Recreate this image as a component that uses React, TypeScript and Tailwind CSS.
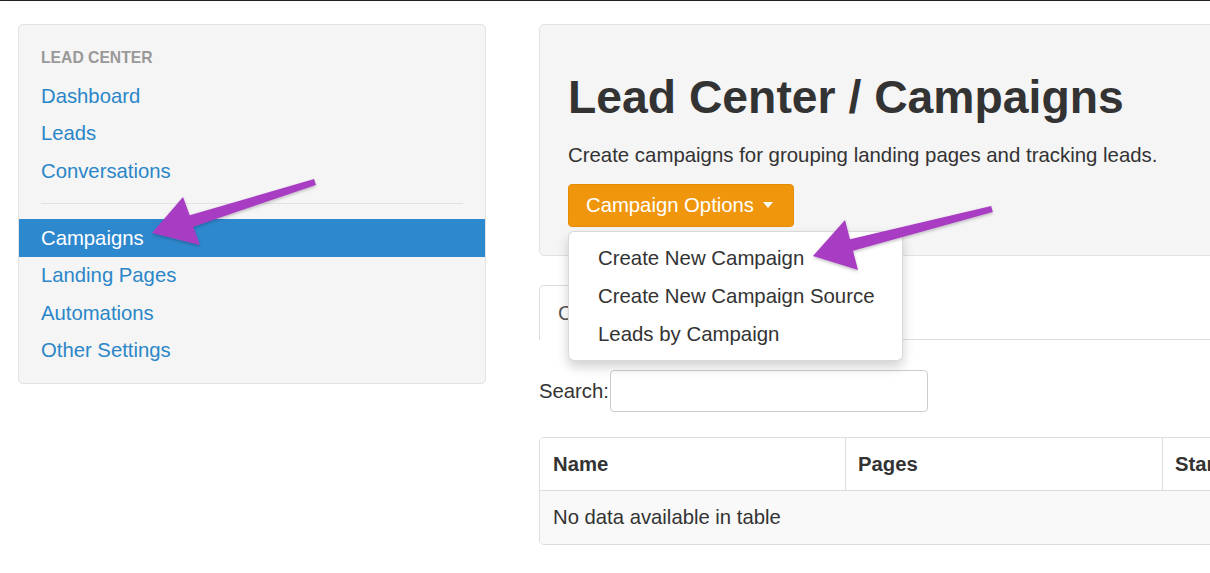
import React from 'react';

const navTop = ['Dashboard', 'Leads', 'Conversations'];
const navBottom = ['Landing Pages', 'Automations', 'Other Settings'];
const menuItems = ['Create New Campaign', 'Create New Campaign Source', 'Leads by Campaign'];

function Sidebar() {
  return (
    <div className="w-[468px] shrink-0 self-start rounded-[5px] border border-[#e3e3e3] bg-[#f5f5f5] pt-[13px] pb-[14px]">
      <div className="flex h-[39px] items-center px-[22px] text-[15.7px] font-bold uppercase text-[#999]">Lead Center</div>
      {navTop.map((label) => (
        <div key={label} className="flex h-[37.5px] items-center px-[22px] text-[20.3px] text-[#2a86c8]">
          {label}
        </div>
      ))}
      <div className="mx-[22px] mt-[13.5px] mb-[15px] h-px bg-[#e2e2e2]" />
      <div className="flex h-[37.5px] items-center bg-[#2e88ce] px-[22px] text-[20.3px] text-white">Campaigns</div>
      {navBottom.map((label) => (
        <div key={label} className="flex h-[37.5px] items-center px-[22px] text-[20.3px] text-[#2a86c8]">
          {label}
        </div>
      ))}
    </div>
  );
}

function CampaignDropdown() {
  return (
    <div className="absolute top-[47px] left-0 z-10 w-[335px] rounded-[6px] border border-black/15 bg-white pt-[7px] pb-[7px] shadow-[0_6px_12px_rgba(0,0,0,0.18)]">
      {menuItems.map((item) => (
        <div key={item} className="flex h-[38px] items-center pl-[29px] text-[20.4px] text-[#333]">
          {item}
        </div>
      ))}
    </div>
  );
}

function Header() {
  return (
    <div className="rounded-[5px] border border-[#e3e3e3] bg-[#f5f5f5] pt-[47px] pb-[28px] pl-[28px]">
      <h1 className="text-[46.3px] font-bold leading-[1.1] text-[#333]">Lead Center / Campaigns</h1>
      <p className="mt-[18px] text-[20.4px] leading-[28px] text-[#333]">
        Create campaigns for grouping landing pages and tracking leads.
      </p>
      <div className="relative mt-[15px] w-fit">
        <button className="flex h-[43px] items-center rounded-[4px] border border-[#e58c05] bg-[#ef960d] pl-[17px] pr-[20px] text-[20.3px] text-white">
          Campaign Options
          <span className="ml-[9px] h-0 w-0 border-x-[5px] border-t-[6px] border-x-transparent border-t-white" />
        </button>
        <CampaignDropdown />
      </div>
    </div>
  );
}

function CampaignTable() {
  return (
    <div className="mt-[25px] overflow-hidden rounded-[5px] border border-[#ddd] text-[20.3px] text-[#333]">
      <div className="flex h-[53px] items-center border-b border-[#ddd] bg-white font-bold">
        <div className="flex h-full w-[305px] items-center px-[13px]">Name</div>
        <div className="flex h-full w-[317px] items-center border-l border-[#ddd] px-[12px]">Pages</div>
        <div className="flex h-full flex-1 items-center border-l border-[#ddd] px-[12px]">Start Date</div>
      </div>
      <div className="flex h-[53px] items-center bg-[#f9f9f9] px-[13px]">No data available in table</div>
    </div>
  );
}

function Arrows() {
  return (
    <svg className="pointer-events-none absolute inset-0 z-20" width="1210" height="573" viewBox="0 0 1210 573">
      <defs>
        <filter id="arrowShadow" x="-10%" y="-10%" width="120%" height="130%">
          <feDropShadow dx="0" dy="1.5" stdDeviation="1.5" floodColor="#000" floodOpacity="0.25" />
        </filter>
      </defs>
      <g fill="#a83cc3" filter="url(#arrowShadow)">
        <polygon points="152,233 183,197 189.7,215.3 314.1,179.1 315.9,184.9 193.3,226.7 200,245" />
        <polygon points="813,256 845,220 850,239.2 991.2,206.1 992.8,211.9 853,250.8 858,270" />
      </g>
    </svg>
  );
}

export default function App() {
  return (
    <div className="relative h-[573px] w-[1210px] overflow-hidden bg-white font-['Liberation_Sans',Arial,sans-serif]">
      <div className="h-px bg-[#222] shadow-[0_1px_8px_rgba(0,0,0,0.12)]" />
      <div className="flex gap-[53px] pt-[23px] pl-[18px]">
        <Sidebar />
        <div className="w-[900px] shrink-0">
          <Header />
          {/* tabs row, mostly hidden under the open dropdown */}
          <div className="mt-[29px] flex border-b border-[#ddd]">
            <div className="-mb-px flex h-[55px] items-center rounded-t-[5px] border border-b-0 border-[#ddd] bg-white px-[18px] text-[20.3px] text-[#555]">
              Campaigns
            </div>
          </div>
          <div className="mt-[30px] flex items-center text-[20.3px] text-[#333]">
            <span>Search:</span>
            <input className="ml-px h-[42px] w-[318px] rounded-[4px] border border-[#ccc] bg-white px-[10px] outline-none" />
          </div>
          <CampaignTable />
        </div>
      </div>
      <Arrows />
    </div>
  );
}
